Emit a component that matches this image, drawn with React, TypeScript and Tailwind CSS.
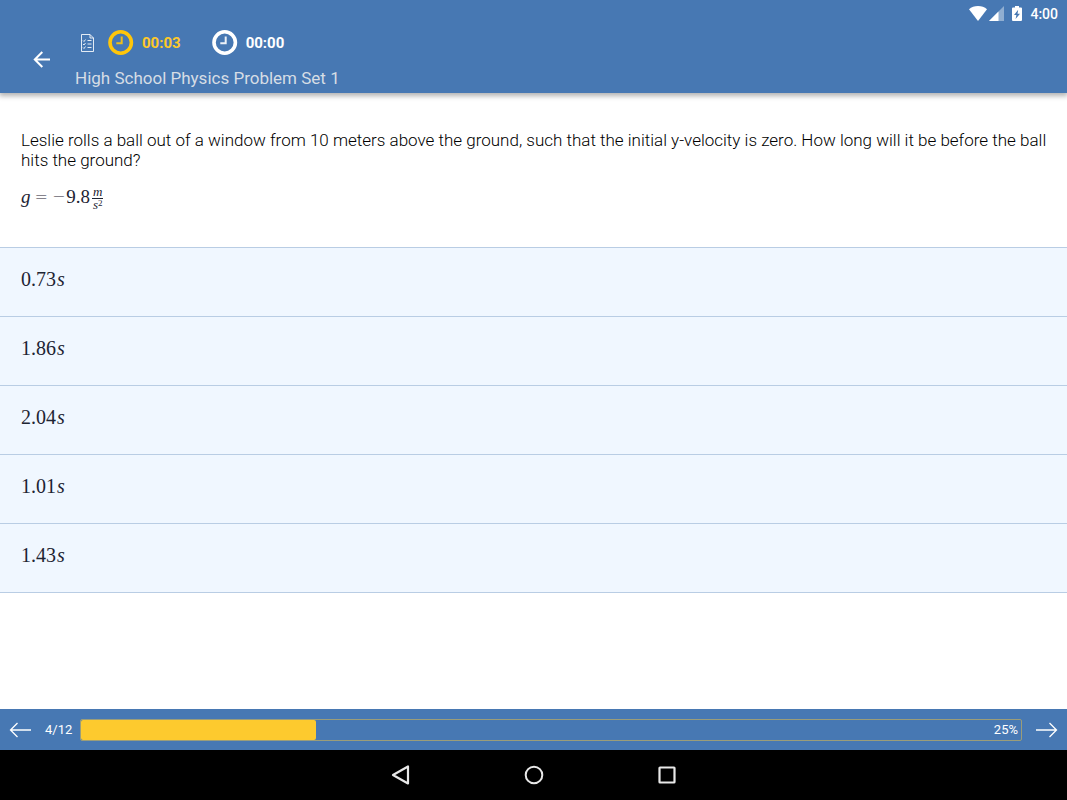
const answers = ["0.73", "1.86", "2.04", "1.01", "1.43"]

const progress = 25

function ClockIcon({ className }: { className: string }) {
  return (
    <svg viewBox="0 0 26 26" className={className} fill="none" stroke="currentColor" aria-hidden="true">
      <circle cx="12.700" cy="12.500" r="10.700" strokeWidth="3.600" />
      <path d="M13.700 6.500v6.800H8.300" strokeWidth="2" strokeOpacity="0.9" />
    </svg>
  )
}

function StatusBar() {
  return (
    <div className="flex h-[27px] items-center justify-end pr-[9px] text-white">
      <svg viewBox="0 0 18 15" className="h-[15px] w-[18px]" fill="currentColor" aria-hidden="true">
        <path d="M9 15 0 3.2C2.400 1.200 5.500 0 9 0s6.600 1.200 9 3.200z" />
      </svg>
      <svg viewBox="0 0 15 15" className="ml-0.5 size-[15px]" fill="currentColor" aria-hidden="true">
        <path d="M15 0v15H0z" opacity="0.4" />
        <path d="M9.500 5.500V15H0z" />
      </svg>
      <svg viewBox="0 0 10 15" className="ml-2 h-[15px] w-[10px]" fill="currentColor" aria-hidden="true">
        <path
          fillRule="evenodd"
          d="M3 0h4v1.500h2q1 0 1 1V14q0 1-1 1H1q-1 0-1-1V2.500q0-1 1-1h2zM6.200 3.800 2 9h2.400l-.8 4L8 7.700H5.500z"
        />
      </svg>
      <span className="ml-2 text-sm font-medium">4:00</span>
    </div>
  )
}

function Header() {
  return (
    <header className="relative bg-[#4778b3] pb-px shadow-[0_2px_5px_1px_rgba(0,0,0,0.3)]">
      <StatusBar />
      <div className="flex h-[65px]">
        <button type="button" aria-label="Back" className="ml-8 mt-[23px] size-5 text-white">
          <svg viewBox="0 0 20 20" className="size-5" fill="none" stroke="currentColor" strokeWidth="2" aria-hidden="true">
            <path d="M18 9.500H3M10.300 2 2.800 9.500l7.500 7.500" />
          </svg>
        </button>
        <div className="ml-[23px]">
          <div className="flex h-8 items-center text-[15px] font-bold">
            <button type="button" aria-label="Problem list" className="ml-1 text-white/85">
              <svg viewBox="0 0 16 20" className="h-5 w-4" fill="none" stroke="currentColor" aria-hidden="true">
                <path d="M2.500 1.500h8.500L14.500 5v13.500h-12zM11 1.500V5h3.500" />
                <path d="m4 7.500 1 1 1.500-2M4 11l1 1 1.500-2M4 14.500l1 1 1.500-2M8.500 7.500h4M8.500 11h4M8.500 14.500h4" />
              </svg>
            </button>
            <ClockIcon className="ml-[13px] size-[26px] text-[#ffc60a]" />
            <span className="ml-2 text-[#ffc929]">00:03</span>
            <ClockIcon className="ml-[31px] size-[26px] text-white" />
            <span className="ml-2 text-white">00:00</span>
          </div>
          <h1 className="mt-[9px] text-[17px] leading-5 text-[#d6dde5]">High School Physics Problem Set 1</h1>
        </div>
      </div>
    </header>
  )
}

function Question() {
  return (
    <section className="pb-4 pl-[21px] pr-2 pt-[37px] text-[#1d2433]">
      <p className="text-[17px] font-light leading-5 text-black">
        Leslie rolls a ball out of a window from 10 meters above the ground, such that the initial y-velocity is zero.
        How long will it be before the ball hits the ground?
      </p>
      <div className="mt-4 flex h-[45px] items-start font-['Liberation_Serif',serif] text-[19px] leading-[22px]">
        <i>g</i>
        <span className="ml-1 font-['DejaVu_Sans',sans-serif] text-base font-extralight leading-[22px]">=</span>
        <span className="ml-1 font-['DejaVu_Sans',sans-serif] text-base font-extralight leading-[22px]">−</span>
        <span className="ml-px">9.8</span>
        <span className="ml-0.5 flex flex-col items-center text-[13px] italic leading-3">
          <span className="border-b border-current px-px">m</span>
          <span className="flex">
            s<span className="text-[9px] not-italic leading-[9px]">2</span>
          </span>
        </span>
      </div>
    </section>
  )
}

function Answers() {
  return (
    <ul className="border-b border-[#b9cde4]">
      {answers.map((answer) => (
        <li key={answer} className="border-t border-[#b9cde4]">
          <button
            type="button"
            className="block h-[68px] w-full bg-[#f0f7ff] px-[21px] pb-1.5 text-left font-['Liberation_Serif',serif] text-xl text-[#1d2433]"
          >
            {answer}
            <i className="ml-px">s</i>
          </button>
        </li>
      ))}
    </ul>
  )
}

function ProgressBar() {
  return (
    <footer className="flex h-[41px] items-center bg-[#4778b3] px-[9px] text-[13px] text-white">
      <button type="button" aria-label="Previous problem">
        <svg viewBox="0 0 24 18" className="h-[18px] w-6" fill="none" stroke="currentColor" strokeWidth="1.300" aria-hidden="true">
          <path d="M22 9H1.500M8.500 2l-7 7 7 7" />
        </svg>
      </button>
      <span className="ml-3">4/12</span>
      <div
        role="progressbar"
        aria-label="Progress"
        aria-valuenow={progress}
        className="relative ml-2 h-[22px] flex-1 rounded-xs border border-[#9b9d79]"
      >
        <div className="h-full rounded-xs bg-[#fdca2e]" style={{ width: `${progress}%` }} />
        <span className="absolute inset-y-0 right-[3px] flex items-center">{progress}%</span>
      </div>
      <button type="button" aria-label="Next problem" className="ml-3">
        <svg viewBox="0 0 24 18" className="h-[18px] w-6" fill="none" stroke="currentColor" strokeWidth="1.300" aria-hidden="true">
          <path d="M2 9h20.500M15.500 2l7 7-7 7" />
        </svg>
      </button>
    </footer>
  )
}

function NavigationBar() {
  return (
    <nav className="flex h-[50px] items-center justify-center gap-[113px] bg-black text-[#e8e8e8]">
      <button type="button" aria-label="Back">
        <svg viewBox="0 0 20 20" className="size-5" fill="none" stroke="currentColor" strokeWidth="2.200" strokeLinejoin="round" aria-hidden="true">
          <path d="M17 1.500v17L2 10z" />
        </svg>
      </button>
      <button type="button" aria-label="Home">
        <svg viewBox="0 0 20 20" className="size-5" fill="none" stroke="currentColor" strokeWidth="2" aria-hidden="true">
          <circle cx="10" cy="10" r="8.300" />
        </svg>
      </button>
      <button type="button" aria-label="Recent apps">
        <svg viewBox="0 0 20 20" className="size-5" fill="none" stroke="currentColor" strokeWidth="2.200" aria-hidden="true">
          <rect x="2.500" y="2.500" width="15" height="15" rx="0.500" />
        </svg>
      </button>
    </nav>
  )
}

export default function App() {
  return (
    <div className="flex min-h-screen flex-col bg-white font-[Roboto,sans-serif]">
      <Header />
      <main className="flex-1">
        <Question />
        <Answers />
      </main>
      <ProgressBar />
      <NavigationBar />
    </div>
  )
}
